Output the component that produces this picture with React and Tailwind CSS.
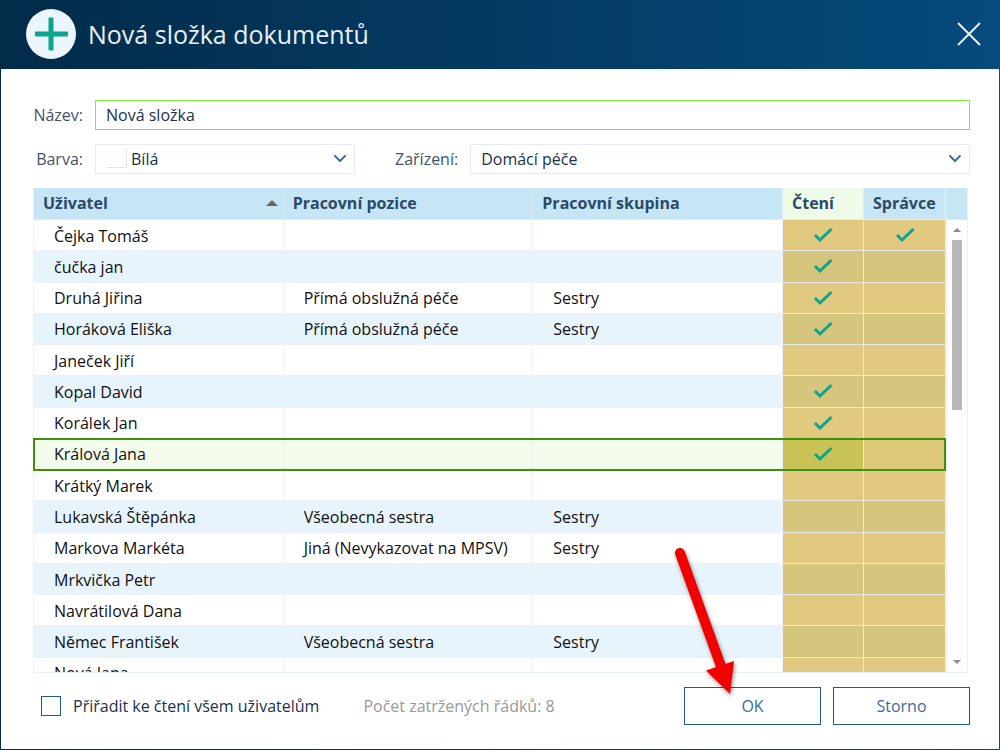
import { useState } from 'react';

const INITIAL_USERS = [
    { name: 'Čejka Tomáš', position: '', group: '', read: true, admin: true },
    { name: 'čučka jan', position: '', group: '', read: true, admin: false },
    { name: 'Druhá Jiřina', position: 'Přímá obslužná péče', group: 'Sestry', read: true, admin: false },
    { name: 'Horáková Eliška', position: 'Přímá obslužná péče', group: 'Sestry', read: true, admin: false },
    { name: 'Janeček Jiří', position: '', group: '', read: false, admin: false },
    { name: 'Kopal David', position: '', group: '', read: true, admin: false },
    { name: 'Korálek Jan', position: '', group: '', read: true, admin: false },
    { name: 'Králová Jana', position: '', group: '', read: true, admin: false },
    { name: 'Krátký Marek', position: '', group: '', read: false, admin: false },
    { name: 'Lukavská Štěpánka', position: 'Všeobecná sestra', group: 'Sestry', read: false, admin: false },
    { name: 'Markova Markéta', position: 'Jiná (Nevykazovat na MPSV)', group: 'Sestry', read: false, admin: false },
    { name: 'Mrkvička Petr', position: '', group: '', read: false, admin: false },
    { name: 'Navrátilová Dana', position: '', group: '', read: false, admin: false },
    { name: 'Němec František', position: 'Všeobecná sestra', group: 'Sestry', read: false, admin: false },
    { name: 'Nová Jana', position: '', group: '', read: false, admin: false },
];

function Chevron() {
    return (
        <svg
            className="pointer-events-none absolute right-2 top-2 h-3 w-3.5"
            viewBox="0 0 14 12"
            fill="none"
            stroke="#3f6f9e"
            strokeWidth="2"
        >
            <path d="M1.5 3.5 L7 9 L12.5 3.5" />
        </svg>
    );
}

function CheckButton({ checked, label, onToggle }) {
    return (
        <button
            type="button"
            role="checkbox"
            aria-checked={checked}
            aria-label={label}
            onClick={onToggle}
            className="flex h-7 w-full items-center justify-center"
        >
            {checked && (
                <svg className="h-4 w-5" viewBox="0 0 20 16" fill="none" stroke="#0ea38d" strokeWidth="3">
                    <path d="M2 8 L7 13 L18.5 2" />
                </svg>
            )}
        </button>
    );
}

function checkCellColor(index, selected, column) {
    if (selected) {
        return column === 'read' ? 'bg-[#c7c356]' : 'bg-[#dcc878]';
    }
    return index % 2 ? 'bg-[#d6c57c]' : 'bg-[#e2c980]';
}

function rowColor(index, selected) {
    if (selected) {
        return 'relative z-10 bg-[#f3fbeb] outline-2 -outline-offset-1 outline-[#408f10]';
    }
    return index % 2 ? 'bg-[#e7f4fb]' : 'bg-white';
}

export default function App() {
    const [users, setUsers] = useState(INITIAL_USERS);
    const [selected, setSelected] = useState(7);
    const [name, setName] = useState('Nová složka');

    const toggle = (index, key) => {
        setUsers(users.map((u, i) => (i === index ? { ...u, [key]: !u[key] } : u)));
    };

    return (
        <div className="flex h-screen flex-col bg-linear-to-r from-[#032b4a] to-[#054b7c] p-px font-['Open_Sans',sans-serif] text-base">
            {/* Title bar */}
            <header className="flex h-17 shrink-0 items-center justify-between pb-0.5 pl-[25px] pr-4">
                <div className="flex items-center gap-3">
                    <svg className="size-[50px]" viewBox="0 0 50 50">
                        <circle cx="25" cy="25" r="25" fill="#eaf5fc" />
                        <rect x="9" y="22.5" width="33" height="5" rx="1" fill="#0ea38d" />
                        <rect x="22.5" y="8.5" width="5" height="33" rx="1" fill="#0ea38d" />
                    </svg>
                    <h1 className="pt-0.5 text-[25px] text-[#e6eef6]">Nová složka dokumentů</h1>
                </div>
                <button type="button" aria-label="Zavřít" className="p-0.5">
                    <svg className="size-6" viewBox="0 0 24 24" stroke="#e6eef6" strokeWidth="2">
                        <path d="M1 1 L23 23 M23 1 L1 23" />
                    </svg>
                </button>
            </header>

            <main className="flex min-h-0 flex-1 flex-col bg-white pb-6 pl-8 pr-[29px] pt-[31px] text-[#1c3149]">
                {/* Form */}
                <div className="flex items-center gap-3">
                    <label htmlFor="name" className="w-[50px] text-right text-[#3f5368]">
                        Název:
                    </label>
                    <input
                        id="name"
                        value={name}
                        onChange={(e) => setName(e.target.value)}
                        className="h-[30px] min-w-0 flex-1 border border-[#7bf03a] px-2.5 outline-none"
                    />
                </div>
                <div className="mt-3.5 flex items-center gap-3">
                    <label htmlFor="color" className="w-[50px] text-right text-[#3f5368]">
                        Barva:
                    </label>
                    <div className="relative w-[260px]">
                        <span className="absolute left-3 top-1 size-5 border-b border-r border-[#e6e6e6]" />
                        <select
                            id="color"
                            className="block h-[30px] w-full appearance-none border border-[#e6ebf7] pl-[35px]"
                        >
                            <option>Bílá</option>
                        </select>
                        <Chevron />
                    </div>
                    <label htmlFor="facility" className="ml-7 text-[#3f5368]">
                        Zařízení:
                    </label>
                    <div className="relative min-w-0 flex-1">
                        <select
                            id="facility"
                            className="block h-[30px] w-full appearance-none border border-[#e6ebf7] pl-2.5"
                        >
                            <option>Domácí péče</option>
                        </select>
                        <Chevron />
                    </div>
                </div>

                {/* Users */}
                <div className="mr-0.5 mt-3.5 flex min-h-0 flex-1 border-b border-[#ebf0fa]">
                    <div className="min-w-0 flex-1 overflow-hidden bg-[#ebf0fa] px-px">
                        <table className="h-[501px] w-full table-fixed border-separate border-spacing-0 text-[#111111]">
                            <colgroup>
                                <col />
                                <col />
                                <col />
                                <col className="w-[81px]" />
                                <col className="w-[81px]" />
                            </colgroup>
                            <thead>
                                <tr className="h-8 bg-[#c6e5f5] text-left text-[#2c4a68]">
                                    <th className="border-b border-r border-[#dfeaf6] px-[9px] pb-0.5 pt-0">
                                        <span className="flex items-center justify-between">
                                            Uživatel
                                            <svg className="-mr-1 h-1.5 w-3" viewBox="0 0 12 6" fill="#666666">
                                                <path d="M6 0 L12 6 H0 Z" />
                                            </svg>
                                        </span>
                                    </th>
                                    <th className="border-b border-r border-[#dfeaf6] px-[9px] pb-0.5 pt-0">Pracovní pozice</th>
                                    <th className="border-b border-r border-[#dfeaf6] px-[9px] pb-0.5 pt-0">Pracovní skupina</th>
                                    <th className="border-b border-r border-[#dfeaf6] bg-[#effbe9] px-[9px] pb-0.5 pt-0">Čtení</th>
                                    <th className="border-b border-[#dfeaf6] px-[9px] pb-0.5 pt-0">Správce</th>
                                </tr>
                            </thead>
                            <tbody>
                                {users.map((user, i) => (
                                    <tr
                                        key={user.name}
                                        onClick={() => setSelected(i)}
                                        className={rowColor(i, i === selected)}
                                    >
                                        <td className="border-b border-r border-[#ebf0fa] px-5 pb-0 pt-px">{user.name}</td>
                                        <td className="whitespace-nowrap border-b border-r border-[#ebf0fa] px-5 pb-0 pt-px">{user.position}</td>
                                        <td className="border-b border-r border-[#ebf0fa] px-5 pb-0 pt-px">{user.group}</td>
                                        <td className={`border-b border-r border-[#e8e8ea] p-0 ${checkCellColor(i, i === selected, 'read')}`}>
                                            <CheckButton
                                                checked={user.read}
                                                label={`Čtení ${user.name}`}
                                                onToggle={() => toggle(i, 'read')}
                                            />
                                        </td>
                                        <td className={`border-b border-[#e8e8ea] p-0 ${checkCellColor(i, i === selected, 'admin')}`}>
                                            <CheckButton
                                                checked={user.admin}
                                                label={`Správce ${user.name}`}
                                                onToggle={() => toggle(i, 'admin')}
                                            />
                                        </td>
                                    </tr>
                                ))}
                            </tbody>
                        </table>
                    </div>

                    {/* Scrollbar */}
                    <div className="flex w-[22px] flex-col border-r border-[#ebf0fa]">
                        <div className="h-8 shrink-0 border-b border-[#dfeaf6] bg-[#c6e5f5]" />
                        <div className="flex flex-1 flex-col items-center border-l border-[#ebebeb] py-2">
                            <svg className="h-1 w-2" viewBox="0 0 8 4" fill="#8a8a8a">
                                <path d="M4 0 L8 4 H0 Z" />
                            </svg>
                            <div className="mt-2 h-[170px] w-2.5 bg-[#b8b8b8]" />
                            <svg className="mt-auto h-1 w-2" viewBox="0 0 8 4" fill="#8a8a8a">
                                <path d="M0 0 H8 L4 4 Z" />
                            </svg>
                        </div>
                    </div>
                </div>

                {/* Footer */}
                <footer className="mt-3.5 flex items-center">
                    <label className="ml-2 flex items-center gap-3">
                        <input
                            type="checkbox"
                            className="size-5 appearance-none border border-[#1f5b8c] checked:bg-[#0ea38d]"
                        />
                        Přiřadit ke čtení všem uživatelům
                    </label>
                    <p className="ml-11 text-[#999999]">Počet zatržených řádků: 8</p>
                    <div className="ml-auto flex gap-3 text-[#3a6c98]">
                        <div className="relative">
                            <button type="button" className="block h-[38px] w-[137px] border border-[#1f5b8c]">
                                OK
                            </button>
                            <svg
                                className="pointer-events-none absolute -left-4 -top-36 h-40 w-20 drop-shadow-[1px_2px_2px_rgba(0,0,0,0.45)]"
                                viewBox="0 0 80 160"
                                fill="#f20000"
                            >
                                <path d="M12 10 L54 126" stroke="#f20000" strokeWidth="10" strokeLinecap="round" />
                                <path d="M38 127.5 L66 118 L62 151 Z" />
                            </svg>
                        </div>
                        <button type="button" className="h-[38px] w-[137px] border border-[#1f5b8c]">
                            Storno
                        </button>
                    </div>
                </footer>
            </main>
        </div>
    );
}
